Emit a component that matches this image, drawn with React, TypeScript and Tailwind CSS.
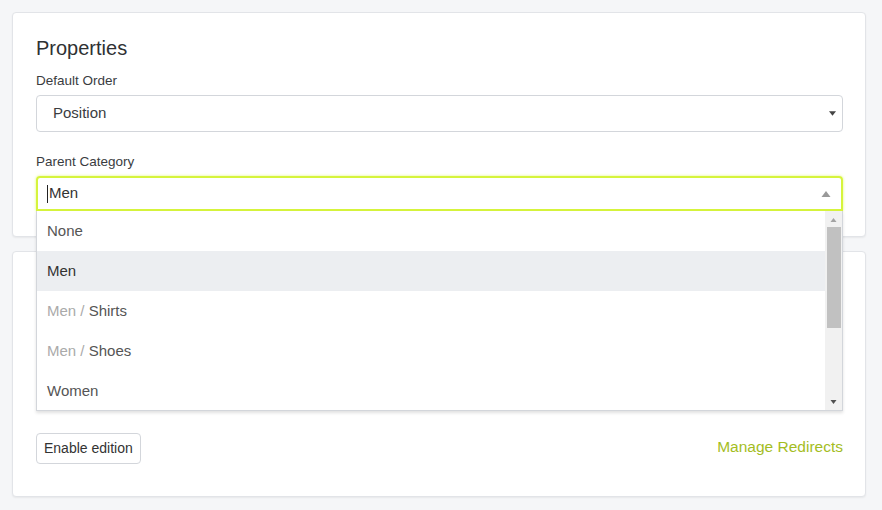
type Option = { prefix?: string; label: string; active?: boolean };

const options: Option[] = [
  { label: 'None' },
  { label: 'Men', active: true },
  { prefix: 'Men / ', label: 'Shirts' },
  { prefix: 'Men / ', label: 'Shoes' },
  { label: 'Women' },
];

function Triangle({ up, className }: { up?: boolean; className?: string }) {
  return (
    <svg width="9" height="6" viewBox="0 0 9 6" className={className}>
      {up ? <path d="M0 6 L4.5 0 L9 6 Z" fill="currentColor" /> : <path d="M0 0 L9 0 L4.5 6 Z" fill="currentColor" />}
    </svg>
  );
}

export default function App() {
  return (
    <div className="min-h-[510px] bg-[#f5f6f8] pl-3 pr-4 pt-3 pb-3 text-[#333] font-['Liberation_Sans',Arial,sans-serif]">
      <div className="relative">
        <div className="h-[225px] rounded bg-white border border-[#e2e4e8] shadow-[0_1px_2px_rgba(0,0,0,0.06)] pl-[23px] pr-[22px] pt-[22px]">
          <h2 className="text-[20px] leading-[26px] text-[#2f3133]">Properties</h2>
          <div className="mt-[11px] text-[13.5px] leading-[18px] text-[#3a3c3f]">Default Order</div>
          <div className="mt-[5px] h-[37px] rounded border border-[#d3d6db] flex items-center justify-between pl-4 pr-[6px]">
            <span className="text-[15px] text-[#3a3c3f]">Position</span>
            <Triangle className="text-[#444] w-[7px] h-[5px]" />
          </div>
          <div className="mt-[21px] text-[13.5px] leading-[18px] text-[#3a3c3f]">Parent Category</div>
          <div className="mt-[5px] h-[35px] rounded-t border-2 border-[#d6f43c] shadow-[0_0_3px_rgba(214,244,60,0.7)] flex items-center justify-between pl-[9px] pr-[10px]">
            <span className="text-[15px] text-[#333] flex items-center">
              <span className="inline-block w-px h-[18px] bg-[#222] mr-px" />
              Men
            </span>
            <Triangle up className="text-[#999] w-[10px] h-[6px]" />
          </div>
        </div>

        <div className="absolute left-6 right-[23px] top-[199px] z-10 h-[200px] bg-white border border-t-0 border-[#d3d6db] shadow-[0_2px_3px_rgba(0,0,0,0.12)] flex">
          <div className="flex-1">
            {options.map(o => (
              <div
                key={o.prefix + o.label}
                className={`h-10 flex items-center pl-[10px] text-[15px] ${o.active ? 'bg-[#eceef1] text-[#333]' : 'text-[#555]'}`}
              >
                {o.prefix && <span className="text-[#aaa] whitespace-pre">{o.prefix}</span>}
                {o.label}
              </div>
            ))}
          </div>
          <div className="w-[17px] bg-[#f1f1f1] flex flex-col items-center">
            <Triangle up className="mt-[7px] text-[#a3a3a3] w-[7px] h-[4px]" />
            <div className="mt-[5px] w-[14px] h-[101px] bg-[#c1c1c1]" />
            <div className="flex-1" />
            <Triangle className="mb-[6px] text-[#505050] w-[7px] h-[4px]" />
          </div>
        </div>

        <div className="mt-[14px] h-[246px] rounded bg-white border border-[#e2e4e8] shadow-[0_1px_2px_rgba(0,0,0,0.06)] pl-[23px] pr-[22px] flex items-end justify-between pb-[32px]">
          <button className="h-[31px] px-[7px] rounded border border-[#d3d6db] bg-white text-[14px] text-[#333]">
            Enable edition
          </button>
          <a className="mb-[7px] text-[15.5px] text-[#a4bd1f] leading-5">Manage Redirects</a>
        </div>
      </div>
    </div>
  );
}
